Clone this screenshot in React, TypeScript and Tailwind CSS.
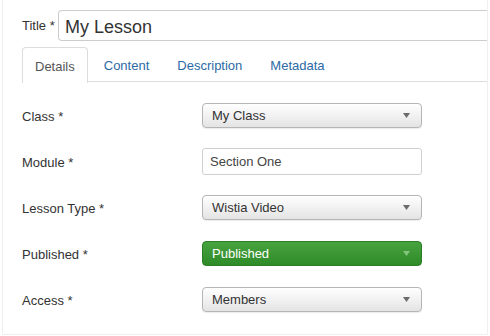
import React from 'react';

const font = { fontFamily: '"Liberation Sans", Arial, Helvetica, sans-serif' };

const Caret = ({ color }: { color: string }) => (
    <svg width="7" height="5" viewBox="0 0 7 5" className="shrink-0">
        <path d="M0 0 L7 0 L3.5 5 Z" fill={color} />
    </svg>
);

const SelectBox = ({ value, green }: { value: string; green?: boolean }) => (
    <div
        className={`w-[220px] h-[25px] rounded-[4px] border flex items-center justify-between pl-[9px] pr-[11px] text-[13px] ${
            green
                ? 'bg-gradient-to-b from-[#47a33e] to-[#2f8a29] border-[#2c7d26] text-white'
                : 'bg-gradient-to-b from-white to-[#e4e4e4] border-[#b5b5b5] text-[#333] shadow-[0_1px_1px_rgba(0,0,0,0.08)]'
        }`}
    >
        <span className="pt-px">{value}</span>
        <Caret color={green ? '#83c57d' : '#6b6b6b'} />
    </div>
);

const TextBox = ({ value }: { value: string }) => (
    <div className="w-[220px] h-[27px] rounded-[3px] border border-[#cfcfcf] bg-white flex items-center pl-[7px] pt-px text-[13px] text-[#444]">
        {value}
    </div>
);

const rows = [
    { label: 'Class', control: <SelectBox value="My Class" /> },
    { label: 'Module', control: <TextBox value="Section One" /> },
    { label: 'Lesson Type', control: <SelectBox value="Wistia Video" /> },
    { label: 'Published', control: <SelectBox value="Published" green /> },
    { label: 'Access', control: <SelectBox value="Members" /> },
];

const tabs = ['Details', 'Content', 'Description', 'Metadata'];

export default function App() {
    return (
        <div className="w-[490px] h-[336px] bg-white px-[2px] overflow-hidden" style={font}>
            <div className="h-[335px] border-x border-b border-[#efefef]">
                {/* Title */}
                <div className="flex items-center pt-[10px] pl-[19px]">
                    <span className="text-[13px] text-[#333] w-[36px]">Title *</span>
                    <div className="flex-1 h-[31px] border border-r-0 border-[#cdcdcd] rounded-l-[4px] flex items-center pl-[6px] pt-[3px] text-[18px] text-[#333]">
                        My Lesson
                    </div>
                </div>

                {/* Tabs */}
                <div className="mt-[6px] ml-[19px] flex border-b border-[#dddddd] h-[35px]">
                    {tabs.map((t, i) => (
                        <div
                            key={t}
                            className={`px-3 mr-[4px] pt-[3px] flex items-center text-[13px] ${
                                i === 0
                                    ? 'border border-b-0 border-[#dddddd] rounded-t-[4px] bg-white text-[#555] h-[36px] -mb-px'
                                    : 'text-[#2c6aa5]'
                            }`}
                        >
                            {t}
                        </div>
                    ))}
                </div>

                {/* Form */}
                <div className="pt-[10px] pl-[19px]">
                    {rows.map((r) => (
                        <div key={r.label} className="h-[46px] flex items-center">
                            <span className="w-[180px] pt-[3px] text-[13px] text-[#333]">{r.label} *</span>
                            {r.control}
                        </div>
                    ))}
                </div>
            </div>
        </div>
    );
}
